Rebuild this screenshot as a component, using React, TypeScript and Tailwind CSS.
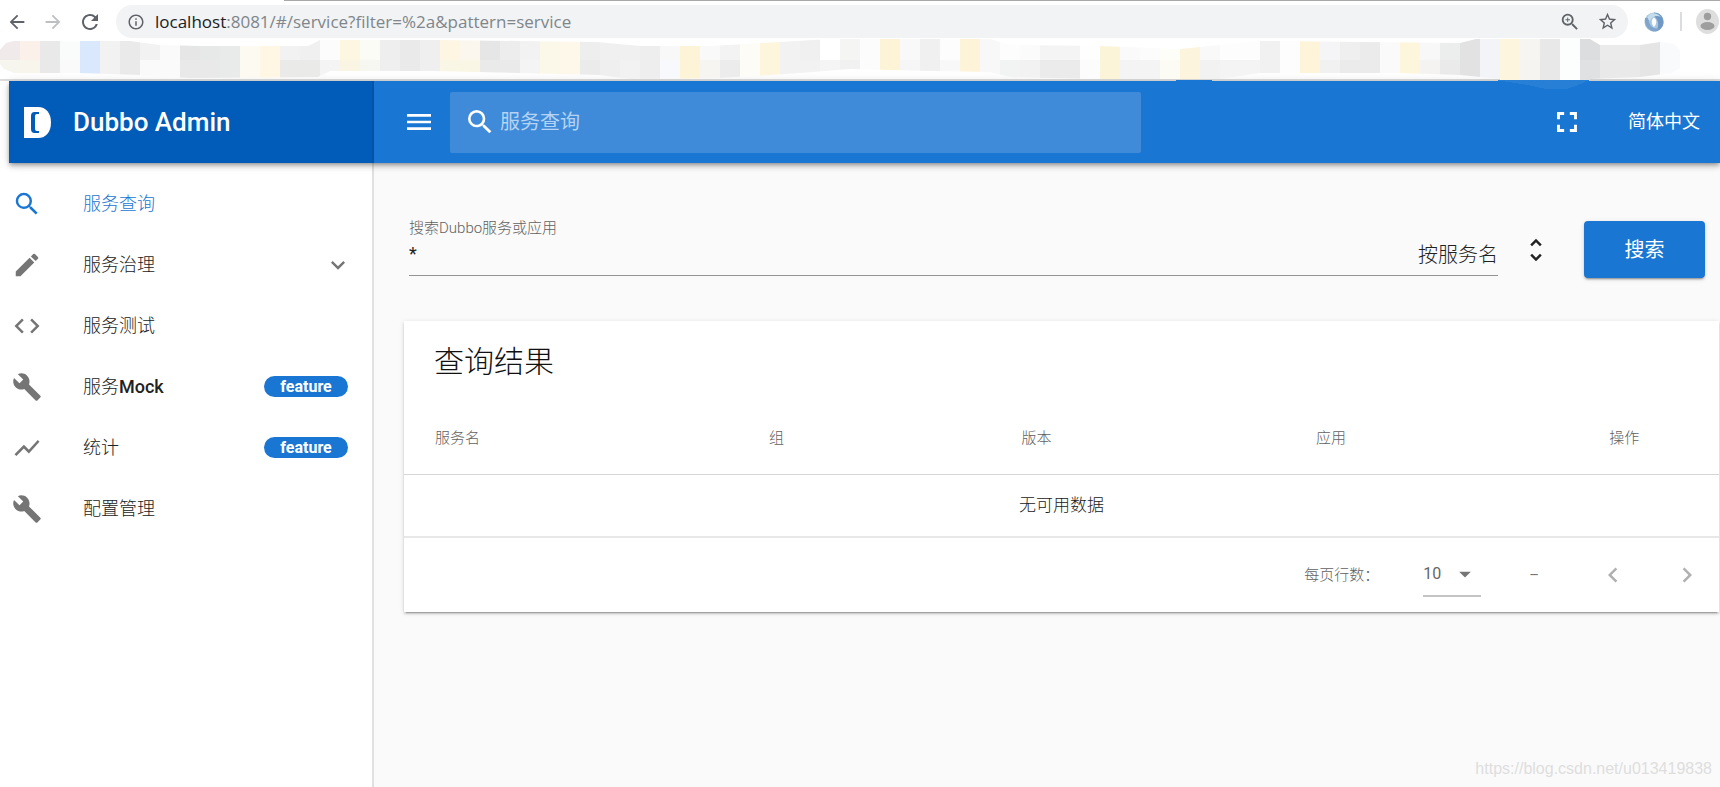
import React, { useState } from 'react';
import type { IconType } from 'react-icons';
import {
  MdArrowBack,
  MdArrowDropDown,
  MdArrowForward,
  MdBuild,
  MdChevronLeft,
  MdChevronRight,
  MdCode,
  MdEdit,
  MdFullscreen,
  MdInfoOutline,
  MdKeyboardArrowDown,
  MdMenu,
  MdRefresh,
  MdSearch,
  MdShowChart,
  MdStarBorder,
  MdUnfoldMore,
  MdZoomIn,
} from 'react-icons/md';

interface MenuItem {
  title: string;
  suffix?: string;
  icon: IconType;
  badge?: string;
  active?: boolean;
  group?: boolean;
}

const menuItems: MenuItem[] = [
  { title: '服务查询', icon: MdSearch, active: true },
  { title: '服务治理', icon: MdEdit, group: true },
  { title: '服务测试', icon: MdCode },
  { title: '服务', suffix: 'Mock', icon: MdBuild, badge: 'feature' },
  { title: '统计', icon: MdShowChart, badge: 'feature' },
  { title: '配置管理', icon: MdBuild },
];

const headers = [
  { text: '服务名', width: 'w-[25.4%]' },
  { text: '组', width: 'w-[19.2%]' },
  { text: '版本', width: 'w-[22.4%]' },
  { text: '应用', width: 'w-[22.3%]' },
  { text: '操作', width: 'w-[10.7%]' },
];

// top / bottom colour of every 20px block in the pixelated bookmarks bar
const blocks = [
  'f0eaea f6f5ee', 'fbf0ea f7f5ec', 'e9e9e9 e9e9e9', 'fafcfb fafafa', 'dae8fd dae8fd', 'f2f2f2 f2f2f2',
  'eaeaea eaeaea', 'f2f2f2 fafafa', 'fafafa fafafa', 'e6e6e6 e9e9e9', 'e7e9e8 e9e9e9', 'e9ebea e9ebea',
  'fdfaf2 fdfaf2', 'fff6e3 fff6e3', 'f2f2f2 eaeae9', 'f0f0f0 eaeae9', 'fcfcfc f4f4f4', 'fdf6e0 faf5e2',
  'fcfcf7 f7f7f2', 'eeeeee efefef', 'eaeaea eaeaea', 'efefef efefef', 'fef6e2 faf6e6', 'fbf6ee faf6e6',
  'e6e6e6 eaeaea', 'ededed eaeaea', 'f2f2f2 f4f4f4', 'fcf8e9 fcf8e9', 'fdf8ea fdf8ea', 'eeeeee ebebeb',
  'f0f0f0 efefef', 'f0f0f0 f2f2f2', 'eeeeee eeeeee', 'f8f8f8 f8f9fc', 'fdf3d7 fdf3d7', 'f9f9f9 f7f5f2',
  'f3f3f3 ececec', 'fefcf7 fefcf7', 'fdf5dc fdf5dc', 'f2f2f2 f2f2f2', 'f0f0f0 f2f2f2', 'ffffff f5f5f5',
  'f5f5f3 f1f1f1', 'fcfcfc fcfcfc', 'fdf3d7 fdf3d7', 'f9f9f9 f6f6f6', 'f0f0f0 f0f0f0', 'fdfdfd f8f8f8',
  'fdf3d9 fdf3d9', 'f8f8f8 f8f8f8', 'fdfdfd f1f4f3', 'fbfbfb f2f2f2', 'f4f4f4 ebebeb', 'f4f4f4 ebebeb',
  'fefefe fcfcfc', 'fcf4d9 fcf4d9', 'fafafa f4f4f4', 'fcfcfc f4f4f4', 'fefef8 fcfcf5', 'fcf4dc fcf4dc',
  'f9f9fa f2f2f3', 'fdfdfd f4f4f4', 'fdfdfd f4f4f4', 'f1f1f1 f1f1f1', 'fdfdfd fdfdfd', 'fdf4da fdf4da',
  'f5f5f7 f1f1f1', 'efefef ebebeb', 'ebebeb ebebeb', 'fafafa fafafa', 'fdf5dc fdf5dc', 'f8f8f8 f4f3f1',
  'eceeed eaeaea', 'e2e2e2 e2e2e2', 'f3f4f8 f3f4f8', 'fdf5dd fdf5dd', 'f7f5f2 f6f4f0', 'e8e8e8 e8e8e8',
  'fcfefd fcfefd', 'dcdddf e0e1e3', 'ebebeb e9e9e9', 'ebebeb e9e9e9', 'e5e5e5 e5e5e5', 'f9fafc f9fafc',
];

const BookmarksBar: React.FC = () => (
  <svg
    className="relative z-20 block h-[41px] w-full overflow-visible"
    viewBox="0 38 1720 41"
    preserveAspectRatio="none"
    shapeRendering="crispEdges"
    aria-hidden="true"
  >
    <clipPath id="bar">
      <path d="M0 50L6 43L14 41H130L160 45L200 46H308L320 40H435L520 41L597 42L640 46H710L780 42L830 39H990L1010 45L1100 46L1180 49L1260 41L1460 43L1476 39H1590L1600 45H1640L1660 42L1674 44L1680 50V68L1672 73L1640 77L1590 79V80H1500V79L1460 75L1400 73H1260L1220 79H1100L1010 77L990 72L930 71L850 69L800 73L720 78L630 79L600 75L520 73L430 71H330L318 77L190 78L140 75L80 73H14L4 69L0 64Z" />
    </clipPath>
    <g clipPath="url(#bar)">
      {blocks.map((block, i) => {
        const [top, bottom] = block.split(' ');
        return (
          <g key={i}>
            <rect x={i * 20} y={38} width={20} height={22} fill={`#${top}`} />
            <rect x={i * 20} y={60} width={20} height={20} fill={`#${bottom}`} />
          </g>
        );
      })}
    </g>
    <rect x={1176} y={80} width={36} height={2} fill="#1976d2" />
    <path d="M1495 80H1590L1576 86L1566 89H1546L1528 85Z" fill="#287fd6" />
  </svg>
);

const BrowserBar: React.FC = () => (
  <div className="bg-white">
    <div className="ml-[284px] h-px bg-[#a9a9a9]" />
    <div className="mt-1 flex h-[33px] items-center pl-1.5 text-[#5f6368]">
      <button aria-label="后退"><MdArrowBack size={22} /></button>
      <button aria-label="前进" className="ml-3.5 text-[#bdbfc1]"><MdArrowForward size={22} /></button>
      <button aria-label="刷新" className="ml-3.5"><MdRefresh size={24} /></button>
      <div className="ml-3.5 flex h-full flex-1 items-center rounded-full bg-[#f1f3f4] pr-2.5 pl-[11px]">
        <MdInfoOutline size={18} />
        <p className="ml-2.5 flex-1 font-['Open_Sans','Noto_Sans',sans-serif] text-[17px] leading-6 text-[#80868b]">
          <span className="text-[#202124]">localhost</span>:8081/#/service?filter=%2a&amp;pattern=service
        </p>
        <button aria-label="缩放"><MdZoomIn size={22} /></button>
        <button aria-label="收藏" className="ml-4"><MdStarBorder size={21} /></button>
      </div>
      <svg className="ml-4 h-5 w-5" viewBox="0 0 20 20" aria-hidden="true">
        <circle cx="10" cy="10" r="9.500" fill="#a9c7e0" />
        <path d="M10 0.500C16 0.500 20 5 19.500 11C19 15 16 19 11 19.500C15 16 16 9 10 4Z" fill="#7098c4" />
        <path d="M1 6C0 12 3 17 9 19.500C12 20 15 18 16 16C10 18 4 14 5 6Z" fill="#7fa5cb" />
        <path d="M5 3C8 0 14 1 17 5C13 3 8 4 6 9C4 8 3 5 5 3Z" fill="#c4dcec" />
        <path d="M10 5.500C7 8 7 12 10 15C13 12 13 8 10 5.500Z" fill="#fff" />
      </svg>
      <div className="ml-4 h-[19px] w-0.5 bg-[#dadce0]" />
      <svg className="mr-px ml-3.5 h-[25px] w-[23px]" viewBox="0 0 23 25" aria-hidden="true">
        <ellipse cx="11.500" cy="12.500" rx="11.500" ry="12.500" fill="#dedede" />
        <circle cx="11.500" cy="7.500" r="3.700" fill="#9e9e9e" />
        <ellipse cx="11.500" cy="17" rx="7" ry="4" fill="#9e9e9e" />
      </svg>
    </div>
    <BookmarksBar />
    <div className="h-0.5 bg-[#dcdcdc]" />
  </div>
);

const Logo: React.FC = () => (
  <svg className="h-[31px] w-[27px]" viewBox="0 0 27 31" aria-hidden="true">
    <path d="M0 0H14C22 0 27 6 27 15.500C27 25 22 31 14 31H0Z" fill="#fff" />
    <path d="M15 5H10.500Q7 5 7 9V22Q7 26 10.500 26H15V24H13Q11 24 11 22V9Q11 7 13 7H15Z" fill="#005cb8" />
  </svg>
);

const Sidebar: React.FC = () => (
  <nav className="w-[365px] shrink-0 border-r-2 border-[#e0e0e0] bg-white pt-2.5">
    <ul>
      {menuItems.map(({ title, suffix, icon: Icon, badge, active, group }) => (
        <li key={title}>
          <a
            href="#"
            className={`flex h-[61px] items-center pr-6 pl-[3px] text-lg ${
              active ? 'text-[#1976d2]' : 'text-[#212121]'
            }`}
          >
            <Icon size={30} className={active ? 'text-[#1976d2]' : 'text-[#757575]'} />
            <span className="ml-[41px] flex-1 font-light">
              {title}
              {suffix && <span className="font-medium">{suffix}</span>}
            </span>
            {badge && (
              <span className="flex h-[21px] w-[84px] items-center justify-center rounded-full bg-[#1976d2] text-base font-bold text-white">
                {badge}
              </span>
            )}
            {group && <MdKeyboardArrowDown size={28} className="mr-[-4px] text-[#757575]" />}
          </a>
        </li>
      ))}
    </ul>
  </nav>
);

const SearchForm: React.FC = () => {
  const [filter, setFilter] = useState('*');

  return (
    <form className="flex items-end pr-[15px] pl-[5px]" onSubmit={e => e.preventDefault()}>
      <div className="mb-0.5 flex h-[61px] flex-1 items-end border-b border-[#949494]">
        <div className="flex-1">
          <label htmlFor="filter" className="block text-[15px] leading-5 font-light text-[#616161]">
            搜索Dubbo服务或应用
          </label>
          <input
            id="filter"
            value={filter}
            onChange={e => setFilter(e.target.value)}
            className="block h-[37px] w-full pb-1.5 text-lg text-[#212121] outline-none"
          />
        </div>
        <span className="pb-1 text-xl leading-8 font-light text-[#212121]">按服务名</span>
      </div>
      <button type="button" aria-label="选择查询方式" className="ml-[23px] h-[57px] text-[#222222]">
        <MdUnfoldMore size={30} />
      </button>
      <button
        type="submit"
        className="ml-[33px] h-[57px] w-[121px] rounded-sm bg-[#1976d2] text-xl text-white shadow-[0_3px_1px_-2px_rgba(0,0,0,.2),0_2px_2px_rgba(0,0,0,.14),0_1px_5px_rgba(0,0,0,.12)]"
      >
        搜索
      </button>
    </form>
  );
};

const ResultCard: React.FC = () => (
  <section className="mt-[43px] mr-px bg-white shadow-[0_3px_1px_-2px_rgba(0,0,0,.2),0_2px_2px_rgba(0,0,0,.14),0_1px_5px_rgba(0,0,0,.12)]">
    <h2 className="px-[30px] pt-[21px] text-[30px] leading-10 font-light text-[#111111]">查询结果</h2>
    <table className="mt-[19px] w-full table-fixed text-left">
      <thead>
        <tr className="h-[73px] border-b border-[#d6d6d6]">
          {headers.map(h => (
            <th key={h.text} className={`${h.width} pt-0.5 pl-[31px] text-[15px] font-light text-[#616161]`}>
              {h.text}
            </th>
          ))}
        </tr>
      </thead>
      <tbody>
        <tr className="h-[63px] border-b-2 border-[#e8e8e8]">
          <td colSpan={5} className="text-center text-[17px] font-light text-[#212121]">无可用数据</td>
        </tr>
      </tbody>
    </table>
    <div className="flex h-[74px] items-center justify-end pr-[17px] text-[15px] text-[#757575]">
      <label htmlFor="rows" className="font-light text-[#616161]">每页行数：</label>
      <div className="relative ml-11 flex h-[44px] w-[58px] items-center border-b-2 border-[#c4c4c4]">
        <select id="rows" defaultValue="10" className="w-full appearance-none text-base text-[#666666] outline-none">
          <option>10</option>
          <option>25</option>
        </select>
        <MdArrowDropDown size={28} className="pointer-events-none absolute right-0.5 text-[#757575]" />
      </div>
      <span className="ml-12">–</span>
      <button aria-label="上一页" className="ml-[59px] text-[#b0b0b0]"><MdChevronLeft size={30} /></button>
      <button aria-label="下一页" className="ml-11 text-[#b0b0b0]"><MdChevronRight size={30} /></button>
    </div>
  </section>
);

export default function App() {
  return (
    <div className="relative flex min-h-screen flex-col bg-white font-['Roboto','Noto_Sans_CJK_SC',sans-serif]">
      <BrowserBar />
      <div className="flex flex-1 flex-col pl-[9px]">
        <header className="relative z-10 flex h-[82px] bg-[#1976d2] text-white shadow-[0_2px_4px_-1px_rgba(0,0,0,.3),0_4px_5px_rgba(0,0,0,.14),0_1px_10px_rgba(0,0,0,.12)]">
          <div className="flex w-[365px] shrink-0 items-center border-r-2 border-[#0053a6] bg-[#005cb8] pl-[15px]">
            <Logo />
            <h1 className="ml-[22px] text-[26px] font-medium">Dubbo Admin</h1>
          </div>
          <div className="flex flex-1 items-center pr-5 pl-[29px]">
            <button aria-label="菜单"><MdMenu size={32} /></button>
            <label className="ml-[15px] flex h-[61px] w-[53.3%] items-center rounded-xs bg-[#3f8bda] pl-3.5">
              <MdSearch size={32} />
              <input
                aria-label="服务查询"
                placeholder="服务查询"
                className="ml-1 flex-1 text-xl outline-none placeholder:text-[#b5d3f2]"
              />
            </label>
            <button aria-label="全屏" className="ml-auto"><MdFullscreen size={34} /></button>
            <button className="ml-11 text-lg">简体中文</button>
          </div>
        </header>
        <div className="flex flex-1">
          <Sidebar />
          <main className="min-w-0 flex-1 bg-[#fafafa] pt-[52px] pl-[30px]">
            <SearchForm />
            <ResultCard />
          </main>
        </div>
      </div>
      <p className="absolute right-2 bottom-1.5 z-10 font-['Liberation_Sans',sans-serif] text-base leading-6 text-[#dedede]">
        https://blog.csdn.net/u013419838
      </p>
    </div>
  );
}
